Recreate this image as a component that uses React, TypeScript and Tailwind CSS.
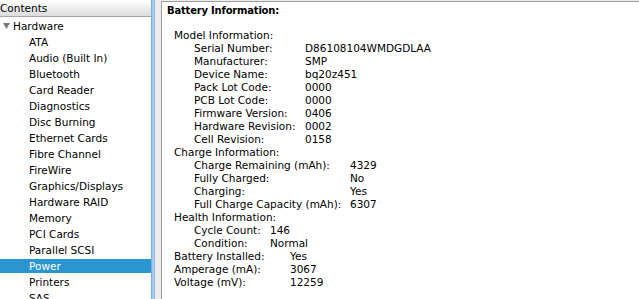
import React from 'react';

const sidebarItems = [
  'ATA',
  'Audio (Built In)',
  'Bluetooth',
  'Card Reader',
  'Diagnostics',
  'Disc Burning',
  'Ethernet Cards',
  'Fibre Channel',
  'FireWire',
  'Graphics/Displays',
  'Hardware RAID',
  'Memory',
  'PCI Cards',
  'Parallel SCSI',
  'Power',
  'Printers',
  'SAS',
];

type Row = [string, string];

const modelInfo: Row[] = [
  ['Serial Number:', 'D86108104WMDGDLAA'],
  ['Manufacturer:', 'SMP'],
  ['Device Name:', 'bq20z451'],
  ['Pack Lot Code:', '0000'],
  ['PCB Lot Code:', '0000'],
  ['Firmware Version:', '0406'],
  ['Hardware Revision:', '0002'],
  ['Cell Revision:', '0158'],
];

const chargeInfo: Row[] = [
  ['Charge Remaining (mAh):', '4329'],
  ['Fully Charged:', 'No'],
  ['Charging:', 'Yes'],
  ['Full Charge Capacity (mAh):', '6307'],
];

const healthInfo: Row[] = [
  ['Cycle Count:', '146'],
  ['Condition:', 'Normal'],
];

const topInfo: Row[] = [
  ['Battery Installed:', 'Yes'],
  ['Amperage (mA):', '3067'],
  ['Voltage (mV):', '12259'],
];

const Group = ({ rows, labelWidth, indent }: { rows: Row[]; labelWidth: string; indent: string }) => (
  <div className={indent}>
    {rows.map(([label, value]) => (
      <div key={label} className="flex h-[13px] leading-[13px] whitespace-nowrap">
        <span className={labelWidth}>{label}</span>
        <span>{value}</span>
      </div>
    ))}
  </div>
);

const App = () => {
  return (
    <div
      className="flex w-[639px] h-[299px] overflow-hidden bg-[#ececec] text-black text-[10.5px]"
      style={{ fontFamily: '"DejaVu Sans", Verdana, sans-serif' }}
    >
      {/* Sidebar */}
      <div className="w-[151px] shrink-0 bg-white flex flex-col">
        <div className="h-[17px] shrink-0 bg-gradient-to-b from-white to-[#dcdcdc] border-b border-[#a5a5a5] leading-[16px] pl-px -ml-[1px]">
          Contents
        </div>
        <div className="flex flex-col gap-[2px] pt-[2px]">
          <div className="flex items-center h-[14px] leading-[14px]">
            <svg width="13" height="14" viewBox="0 0 13 14" className="shrink-0">
              <path d="M3 4 L10 4 L6.5 10 Z" fill="#7a7a7a" />
            </svg>
            <span>Hardware</span>
          </div>
          {sidebarItems.map((item) => (
            <div
              key={item}
              className={`h-[14px] leading-[14px] pl-[29px] ${
                item === 'Power' ? 'bg-[#2b95d0] text-white' : ''
              }`}
            >
              {item}
            </div>
          ))}
        </div>
      </div>

      {/* Focus ring / splitter */}
      <div className="w-[4px] shrink-0 bg-gradient-to-r from-[#6d9fd6] via-[#b6d4f2] to-[#86b2e2]" />
      <div className="w-[6px] shrink-0 bg-[#ececec]" />

      {/* Detail pane */}
      <div className="flex-1 bg-white border-l border-t border-[#9c9c9c] mt-px pl-[5px]">
        <div className="font-bold text-[10px] tracking-[-0.2px] h-[13px] leading-[13px] mt-[2px]">
          Battery Information:
        </div>
        <div className="mt-[12px] pl-[7px]">
          <div className="h-[13px] leading-[13px]">Model Information:</div>
          <Group rows={modelInfo} labelWidth="w-[111px]" indent="pl-[20px]" />
          <div className="h-[13px] leading-[13px]">Charge Information:</div>
          <Group rows={chargeInfo} labelWidth="w-[156px]" indent="pl-[20px]" />
          <div className="h-[13px] leading-[13px]">Health Information:</div>
          <Group rows={healthInfo} labelWidth="w-[76px]" indent="pl-[20px]" />
          <Group rows={topInfo} labelWidth="w-[116px]" indent="" />
        </div>
      </div>
    </div>
  );
};

export default App;
